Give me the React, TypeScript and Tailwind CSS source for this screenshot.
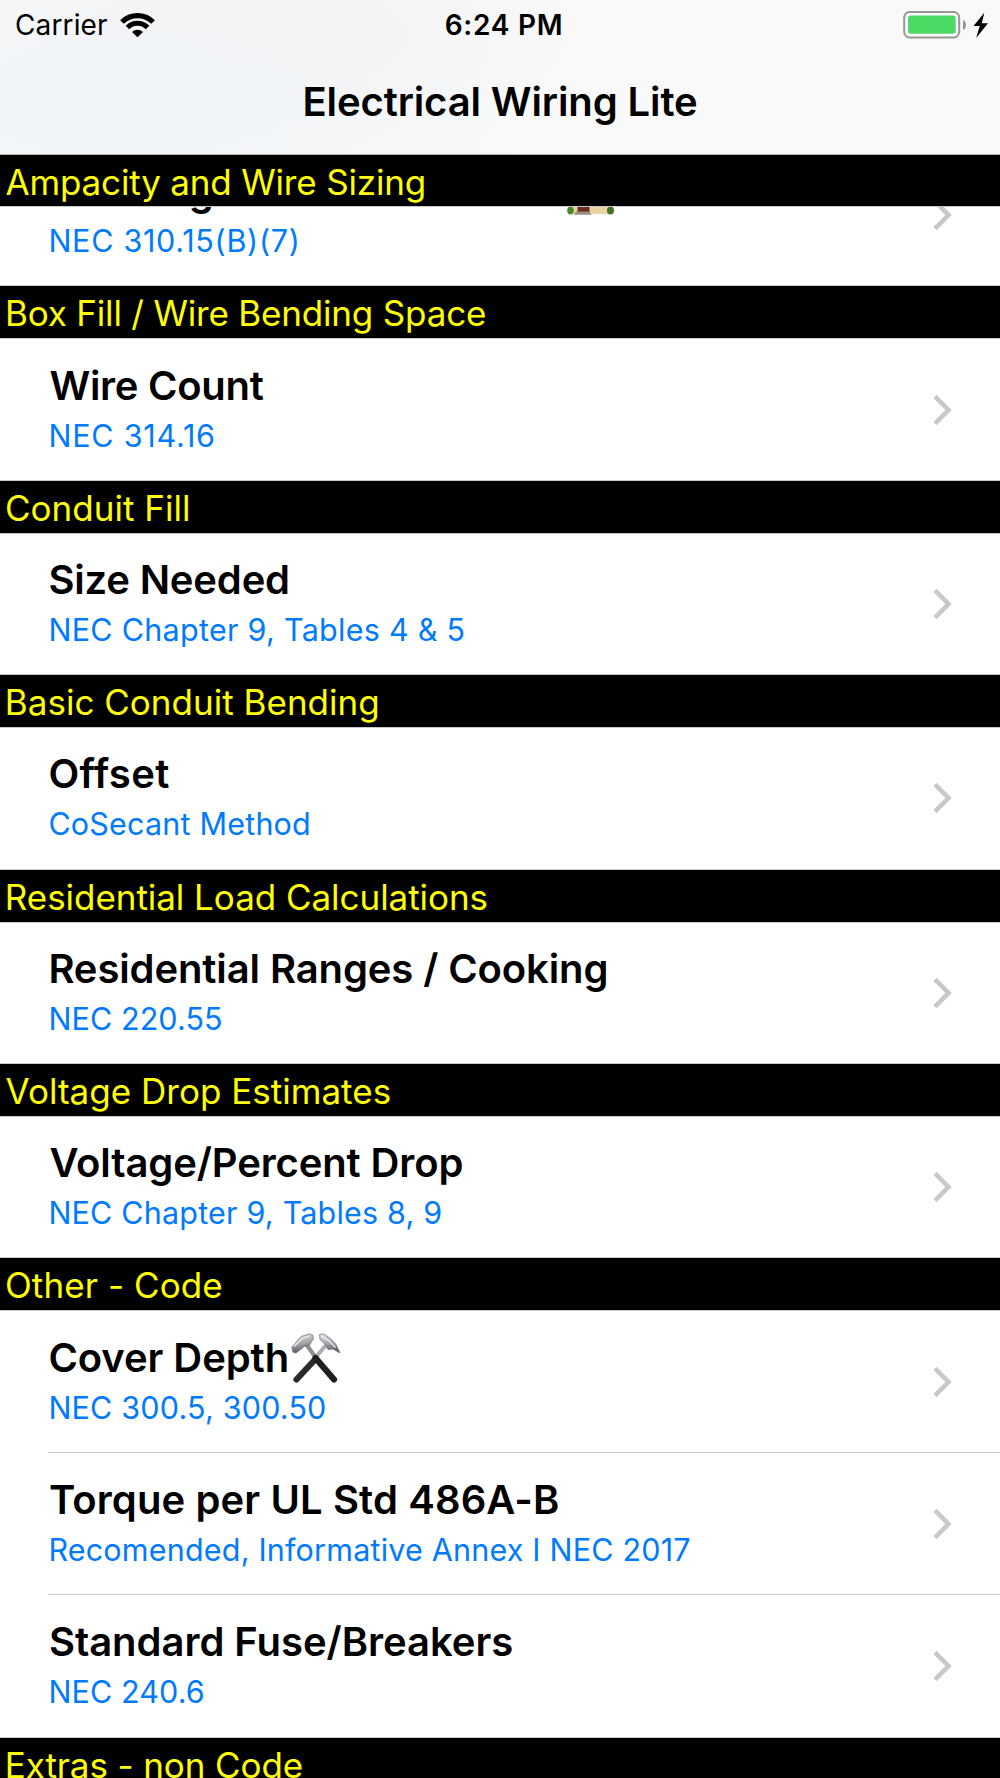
import type { ReactNode } from "react";

interface Item {
  title: string;
  titleClass?: string;
  detail: string;
  detailClass?: string;
  emoji?: ReactNode;
}

interface Section {
  heading: string;
  headingClass: string;
  items: Item[];
}

function HouseIcon() {
  return (
    <svg viewBox="0 0 48 48" className="ml-[3px] h-12 w-12 shrink-0">
      <path d="M6 20 24 4l18 16v27H6z" fill="#ecd3a5" />
      <path d="M2 22 24 2l22 20-3 3L24 8 5 25z" fill="#8a3b2a" />
      <rect x="10.5" y="30" width="12" height="15" fill="#6b2c20" />
      <path d="M9 44.500h13.500l2 3.300H7z" fill="#9b8d80" />
      <ellipse cx="3.500" cy="43.500" rx="3.300" ry="4" fill="#4c8a2c" />
      <ellipse cx="43.500" cy="43.500" rx="3.500" ry="4" fill="#3f7423" />
    </svg>
  );
}

function HammerPickIcon() {
  return (
    <svg viewBox="0 0 50 50" className="ml-[2px] h-[50px] w-[50px] shrink-0" fill="none">
      <defs>
        <linearGradient id="steel" x1="0.5" y1="0" x2="0.7" y2="1">
          <stop offset="0" stopColor="#dcdce0" />
          <stop offset="0.5" stopColor="#a0a0a6" />
          <stop offset="1" stopColor="#47474b" />
        </linearGradient>
      </defs>
      <path d="M15 11 25 25" stroke="#8e8e94" strokeWidth="4" />
      <path d="M36 11 24 25" stroke="#aeaeb4" strokeWidth="4" />
      <path d="M25 25.500 5.500 46.500" stroke="#2b2b2d" strokeWidth="6.200" strokeLinecap="round" />
      <path d="M24.500 25 43 46.500" stroke="#1f1f21" strokeWidth="6.200" strokeLinecap="round" />
      <path
        d="M.8 14.500 10 3.500l9-2.800 3 1.800.3 3.500-3.800 6-4.500 1L5 20l-3-.8z"
        fill="url(#steel)"
        stroke="#6b6b70"
        strokeWidth="0.7"
      />
      <path d="m3 13.500 8-8 7-2.500" stroke="#f4f4f6" strokeWidth="1.200" />
      <path
        d="M28.500 1.500 32.500.8l7 4.700 5.500 6 4 8.500-7-4-5 .5-3-5.500-5-4.500z"
        fill="url(#steel)"
        stroke="#6b6b70"
        strokeWidth="0.7"
      />
      <path d="m30.500 3 8 5.500 6 6" stroke="#f0f0f2" strokeWidth="1.100" />
    </svg>
  );
}

const sections: Section[] = [
  {
    heading: "Ampacity and Wire Sizing",
    headingClass: "tracking-[-0.17px] pl-[5.5px]",
    items: [
      {
        title: "Dwelling Services & Feeders",
        titleClass: "w-[516px] tracking-[-0.15px]",
        detail: "NEC 310.15(B)(7)",
        detailClass: "tracking-[0.72px]",
        emoji: <HouseIcon />,
      },
    ],
  },
  {
    heading: "Box Fill / Wire Bending Space",
    headingClass: "tracking-[-0.18px] pl-[5px]",
    items: [
      {
        title: "Wire Count",
        titleClass: "tracking-[-0.27px] pl-px",
        detail: "NEC 314.16",
        detailClass: "tracking-[0.784px]",
      },
    ],
  },
  {
    heading: "Conduit Fill",
    headingClass: "tracking-[0.02px] pl-[5px]",
    items: [
      {
        title: "Size Needed",
        titleClass: "tracking-[-0.17px]",
        detail: "NEC Chapter 9, Tables 4 & 5",
        detailClass: "tracking-[0.28px]",
      },
    ],
  },
  {
    heading: "Basic Conduit Bending",
    headingClass: "tracking-[0.02px] pl-[4.8px]",
    items: [{ title: "Offset", titleClass: "tracking-[0.34px]", detail: "CoSecant Method" }],
  },
  {
    heading: "Residential Load Calculations",
    headingClass: "tracking-[-0.04px] pl-[4.8px]",
    items: [
      {
        title: "Residential Ranges / Cooking",
        titleClass: "tracking-[-0.114px]",
        detail: "NEC 220.55",
        detailClass: "tracking-[0.1px]",
      },
    ],
  },
  {
    heading: "Voltage Drop Estimates",
    headingClass: "tracking-[0.02px] pl-[5.5px]",
    items: [
      {
        title: "Voltage/Percent Drop",
        titleClass: "tracking-[-0.12px] pl-px",
        detail: "NEC Chapter 9, Tables 8, 9",
      },
    ],
  },
  {
    heading: "Other - Code",
    headingClass: "tracking-[0.095px] pl-[5px]",
    items: [
      {
        title: "Cover Depth",
        titleClass: "tracking-[-0.08px]",
        detail: "NEC 300.5, 300.50",
        emoji: <HammerPickIcon />,
      },
      {
        title: "Torque per UL Std 486A-B",
        titleClass: "tracking-[0.11px] pl-[0.5px]",
        detail: "Recomended, Informative Annex I NEC 2017",
      },
      {
        title: "Standard Fuse/Breakers",
        titleClass: "tracking-[-0.03px] pl-[0.5px]",
        detail: "NEC 240.6",
        detailClass: "tracking-[0.12px]",
      },
    ],
  },
  { heading: "Extras - non Code", headingClass: "tracking-[-0.1px] pl-[4.8px]", items: [] },
];

function StatusBar() {
  return (
    <div className="grid h-[50px] grid-cols-3 text-[28px] leading-[51px]">
      <div className="flex pl-[15px]">
        <span className="tracking-[0.127px]">Carrier</span>
        <svg viewBox="0 0 35 26" className="mt-[11.5px] ml-[12px] h-[26px] w-[35px]" fill="none">
          <path d="M1.940 10A22 22 0 0 1 33.060 10" stroke="black" strokeWidth="5.200" />
          <path d="M7.460 15.500A14.200 14.200 0 0 1 27.540 15.500" stroke="black" strokeWidth="5" />
          <path d="M12 20A7.700 7.700 0 0 1 23 20L17.500 25.300z" fill="black" />
        </svg>
      </div>
      <div className="pl-2 text-center font-semibold tracking-[0.75px]">6:24 PM</div>
      <div className="flex justify-end pr-[12px]">
        <svg viewBox="0 0 86 30" className="mt-[9.5px] h-[30px] w-[86px]">
          <rect x="2.200" y="2" width="55" height="25.500" rx="5.500" fill="white" stroke="#969696" strokeWidth="2" />
          <rect x="6" y="5.600" width="47.700" height="18.200" rx="2.500" fill="#4cd964" />
          <path d="M61 10c4 1.700 4 8.300 0 10z" fill="#969696" />
          <path d="M82.300 2.800 71.500 16h6.200L74.200 28 86 13.300h-6.200z" fill="black" />
        </svg>
      </div>
    </div>
  );
}

function Row({ item, last }: { item: Item; last: boolean }) {
  return (
    <li className={`h-[142.4px] ${last ? "border-b border-[#c8c7cc]" : "pl-[48px]"}`}>
      <div
        className={`flex h-full items-center justify-between pr-[48.5px] ${
          last ? "pl-[48.4px]" : "border-b border-[#c8c7cc] pl-[0.4px]"
        }`}
      >
        <div className="h-full pt-[23.2px]">
          <div className="flex h-12 items-center text-[40px] leading-[48px] font-semibold whitespace-nowrap">
            <span className={item.titleClass}>{item.title}</span>
            {item.emoji}
          </div>
          <div
            className={`mt-[7px] text-[30.5px] leading-[38px] whitespace-nowrap text-[#007aff] ${
              item.detailClass ?? "tracking-[0.195px]"
            }`}
          >
            {item.detail}
          </div>
        </div>
        <svg viewBox="0 0 20 32" className="mt-px h-8 w-5" fill="none">
          <path d="M3 2.400 16.500 16 3 29.600" stroke="#c7c7cc" strokeWidth="4.600" />
        </svg>
      </div>
    </li>
  );
}

export default function App() {
  return (
    <div className="flex h-[1778px] w-[1000px] flex-col overflow-hidden bg-white font-['Inter',sans-serif] text-black">
      <header className="h-[155px] shrink-0 border-b border-[#b2b2b2] bg-[#f9f9f9] bg-[radial-gradient(ellipse_430px_170px_at_120px_105px,#f0f4f8,transparent),radial-gradient(ellipse_330px_130px_at_270px_30px,#f2f2f2,transparent)]">
        <StatusBar />
        <h1 className="text-center text-[40px] leading-[103px] font-semibold tracking-[-0.124px]">
          Electrical Wiring Lite
        </h1>
      </header>

      <main className="flex-1 overflow-hidden">
        {sections.map((section, i) => (
          <section key={section.heading}>
            <h2
              className={`relative z-10 bg-black pt-px text-[35px] leading-[52px] text-[#ffff00] shadow-[0_1px_0_#c8c7cc] ${
                i === 0 ? "h-[51.4px]" : "h-[52px]"
              } ${section.headingClass}`}
            >
              {section.heading}
            </h2>
            {/* the first section is scrolled partly under its sticky heading */}
            <ul className={i === 0 ? "-mt-[62.4px]" : ""}>
              {section.items.map((item, j) => (
                <Row key={item.title} item={item} last={j === section.items.length - 1} />
              ))}
            </ul>
          </section>
        ))}
      </main>
    </div>
  );
}
